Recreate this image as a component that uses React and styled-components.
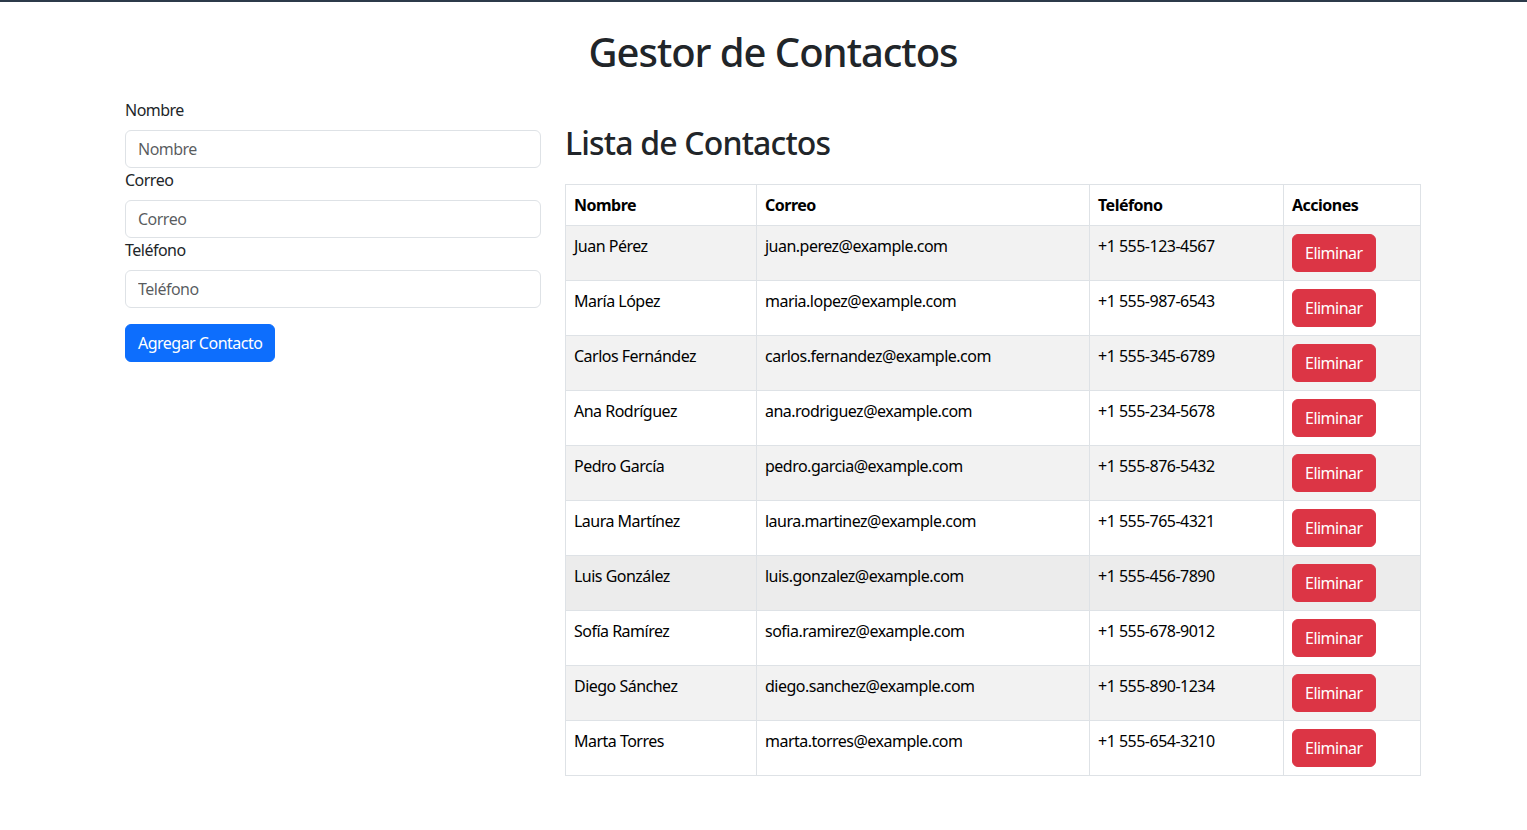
import React from 'react'
import styled, { createGlobalStyle } from 'styled-components';

const GlobalStyle = createGlobalStyle`
    * { box-sizing: border-box; }
    body {
        margin: 0;
        font-family: "Noto Sans", "Open Sans", sans-serif;
        font-size: 16px;
        line-height: 1.5;
        letter-spacing: -0.032em;
        color: #212529;
        background: #fff;
        border-top: 2px solid #2c3a4a;
    }
`

const Page = styled.div `
    padding-left: 19px;
`

const Container = styled.div `
    width: 1296px;
    margin: 0 auto;
    padding-top: 26px;
`

const Title = styled.h1 `
    margin: 0 0 22px;
    font-size: 40px;
    font-weight: 500;
    line-height: 1.2;
    letter-spacing: -0.026em;
    text-align: center;
`

const Row = styled.div `
    display: grid;
    grid-template-columns: 416px 856px;
    gap: 24px;
    align-items: start;
`

const Form = styled.form `
    display: flex;
    flex-direction: column;
`

const Label = styled.label `
    display: block;
    margin-bottom: 8px;
`

const Input = styled.input `
    display: block;
    width: 100%;
    height: 38px;
    padding: 6px 12px;
    font: inherit;
    letter-spacing: inherit;
    color: #212529;
    border: 1px solid #dee2e6;
    border-radius: 6px;
    outline: none;

    &::placeholder {
        color: rgba(33, 37, 41, 0.75);
    }
`

const Button = styled.button `
    align-self: flex-start;
    height: 38px;
    padding: 6px 12px;
    font: inherit;
    letter-spacing: inherit;
    color: #fff;
    background-color: ${props => props.$color};
    border: 1px solid ${props => props.$color};
    border-radius: 6px;
    margin-top: ${props => props.$top || 0}px;
    cursor: pointer;
`

const Section = styled.div `
    padding-top: 26px;
`

const Subtitle = styled.h2 `
    margin: 0 0 22px;
    font-size: 32px;
    font-weight: 500;
    line-height: 1.2;
    letter-spacing: -0.026em;
`

const Table = styled.table `
    width: 856px;
    table-layout: fixed;
    border-collapse: collapse;
    color: #000;
`

const Th = styled.th `
    text-align: left;
    font-weight: 700;
    padding: 8px;
    border: 1px solid #dee2e6;
    vertical-align: top;
`

const Tr = styled.tr `
    background-color: ${props => props.$hover ? '#ececec' : props.$striped ? '#f2f2f2' : '#fff'};
`

const Td = styled.td `
    padding: 8px;
    border: 1px solid #dee2e6;
    vertical-align: top;
`

const contacts = [
    ['Juan Pérez', 'juan.perez@example.com', '+1 555-123-4567'],
    ['María López', 'maria.lopez@example.com', '+1 555-987-6543'],
    ['Carlos Fernández', 'carlos.fernandez@example.com', '+1 555-345-6789'],
    ['Ana Rodríguez', 'ana.rodriguez@example.com', '+1 555-234-5678'],
    ['Pedro García', 'pedro.garcia@example.com', '+1 555-876-5432'],
    ['Laura Martínez', 'laura.martinez@example.com', '+1 555-765-4321'],
    ['Luis González', 'luis.gonzalez@example.com', '+1 555-456-7890'],
    ['Sofía Ramírez', 'sofia.ramirez@example.com', '+1 555-678-9012'],
    ['Diego Sánchez', 'diego.sanchez@example.com', '+1 555-890-1234'],
    ['Marta Torres', 'marta.torres@example.com', '+1 555-654-3210'],
]

export default function App() {
    return (
        <Page>
            <GlobalStyle />
            <Container>
                <Title>Gestor de Contactos</Title>
                <Row>
                    <Form onSubmit={e => e.preventDefault()}>
                        <Label>Nombre</Label>
                        <Input placeholder="Nombre" />
                        <Label>Correo</Label>
                        <Input placeholder="Correo" />
                        <Label>Teléfono</Label>
                        <Input placeholder="Teléfono" />
                        <Button $color="#0d6efd" $top={16}>Agregar Contacto</Button>
                    </Form>
                    <Section>
                        <Subtitle>Lista de Contactos</Subtitle>
                        <Table>
                            <colgroup>
                                <col style={{ width: 191 }} />
                                <col style={{ width: 333 }} />
                                <col style={{ width: 194 }} />
                                <col style={{ width: 137 }} />
                            </colgroup>
                            <thead>
                                <tr>
                                    <Th>Nombre</Th>
                                    <Th>Correo</Th>
                                    <Th>Teléfono</Th>
                                    <Th>Acciones</Th>
                                </tr>
                            </thead>
                            <tbody>
                                {contacts.map(([name, email, phone], i) => (
                                    <Tr key={email} $striped={i % 2 === 0} $hover={i === 6}>
                                        <Td>{name}</Td>
                                        <Td>{email}</Td>
                                        <Td>{phone}</Td>
                                        <Td><Button $color="#dc3545">Eliminar</Button></Td>
                                    </Tr>
                                ))}
                            </tbody>
                        </Table>
                    </Section>
                </Row>
            </Container>
        </Page>
    )
}
